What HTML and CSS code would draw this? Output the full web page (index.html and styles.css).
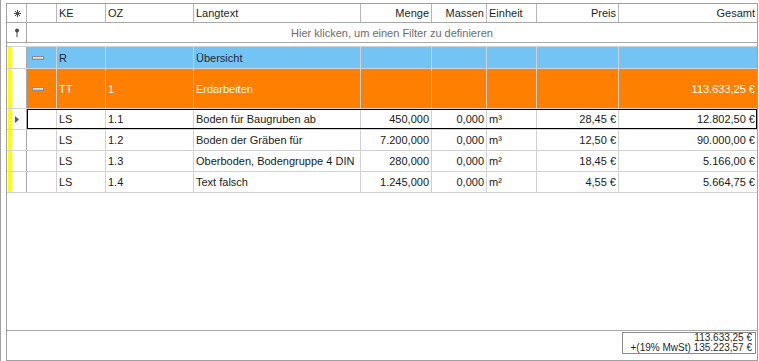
FILE: index.html
```html
<!DOCTYPE html>
<html lang="de">
<head>
    <meta charset="UTF-8">
    <title>Positionen</title>
    <link rel="stylesheet" href="styles.css">
</head>
<body>

<div class="frame">
<div class="grid">

    <!-- Column headers -->
    <div class="row head">
        <div class="cell ind center">
            <svg width="7" height="7" viewBox="0 0 7 7"><path d="M3.5 0v7M0 3.5h7M1 1l5 5M6 1l-5 5" stroke="#4a4a4a" stroke-width="1" fill="none"/></svg>
        </div>
        <div class="cell"></div>
        <div class="cell">KE</div>
        <div class="cell">OZ</div>
        <div class="cell">Langtext</div>
        <div class="cell r">Menge</div>
        <div class="cell r">Massen</div>
        <div class="cell">Einheit</div>
        <div class="cell r">Preis</div>
        <div class="cell r">Gesamt</div>
    </div>

    <!-- Auto filter row -->
    <div class="row filter">
        <div class="cell ind center">
            <svg width="6" height="9" viewBox="0 0 6 9"><circle cx="3" cy="2.5" r="2" fill="#4a4a4a"/><path d="M3 4v5" stroke="#4a4a4a" stroke-width="1"/></svg>
        </div>
        <div class="cell filter-text">Hier klicken, um einen Filter zu definieren</div>
    </div>

    <div class="gap"></div>

    <!-- Group rows -->
    <div class="row node blue">
        <div class="cell ind"><span class="bar"></span></div>
        <div class="cell exp"><span class="minus"></span></div>
        <div class="cell">R</div>
        <div class="cell"></div>
        <div class="cell">Übersicht</div>
        <div class="cell"></div>
        <div class="cell"></div>
        <div class="cell"></div>
        <div class="cell"></div>
        <div class="cell"></div>
    </div>
    <div class="row node orange">
        <div class="cell ind"><span class="bar"></span></div>
        <div class="cell exp"><span class="minus"></span></div>
        <div class="cell">TT</div>
        <div class="cell">1</div>
        <div class="cell">Erdarbeiten</div>
        <div class="cell"></div>
        <div class="cell"></div>
        <div class="cell"></div>
        <div class="cell"></div>
        <div class="cell r">113.633,25 €</div>
    </div>

    <!-- Positions -->
    <div class="row item selected">
        <div class="cell ind"><span class="bar"></span><svg class="arrow" width="4" height="7" viewBox="0 0 4 7"><path d="M0 0L4 3.5L0 7z" fill="#5c5c5c"/></svg></div>
        <div class="cell"></div>
        <div class="cell">LS</div>
        <div class="cell">1.1</div>
        <div class="cell">Boden für Baugruben ab</div>
        <div class="cell r">450,000</div>
        <div class="cell r">0,000</div>
        <div class="cell">m³</div>
        <div class="cell r">28,45 €</div>
        <div class="cell r">12.802,50 €</div>
    </div>
    <div class="row item">
        <div class="cell ind"><span class="bar"></span></div>
        <div class="cell"></div>
        <div class="cell">LS</div>
        <div class="cell">1.2</div>
        <div class="cell">Boden der Gräben für</div>
        <div class="cell r">7.200,000</div>
        <div class="cell r">0,000</div>
        <div class="cell">m³</div>
        <div class="cell r">12,50 €</div>
        <div class="cell r">90.000,00 €</div>
    </div>
    <div class="row item">
        <div class="cell ind"><span class="bar"></span></div>
        <div class="cell"></div>
        <div class="cell">LS</div>
        <div class="cell">1.3</div>
        <div class="cell">Oberboden, Bodengruppe 4 DIN</div>
        <div class="cell r">280,000</div>
        <div class="cell r">0,000</div>
        <div class="cell">m²</div>
        <div class="cell r">18,45 €</div>
        <div class="cell r">5.166,00 €</div>
    </div>
    <div class="row item">
        <div class="cell ind"><span class="bar"></span></div>
        <div class="cell"></div>
        <div class="cell">LS</div>
        <div class="cell">1.4</div>
        <div class="cell">Text falsch</div>
        <div class="cell r">1.245,000</div>
        <div class="cell r">0,000</div>
        <div class="cell">m²</div>
        <div class="cell r">4,55 €</div>
        <div class="cell r">5.664,75 €</div>
    </div>

    <div class="spacer"></div>

    <!-- Summary footer -->
    <div class="footer">
        <div class="sum">
            <div>113.633,25 €</div>
            <div>+(19% MwSt) 135.223,57 €</div>
        </div>
    </div>

</div>
</div>

</body>
</html>
```

FILE: styles.css
```css
* {
    box-sizing: border-box;
}
body {
    margin: 0;
    font-family: "Liberation Sans", Arial, sans-serif;
    font-size: 11px;
    color: #1a1a1a;
    background: #fff;
}
.frame {
    height: 361px;
    border-left: 1px solid #a0a0a0;
    padding: 3px 0 0 5px;
}
.grid {
    width: 752px;
    height: 358px;
    border: 1px solid #a0a0a0;
    display: flex;
    flex-direction: column;
}
.row {
    display: grid;
    grid-template-columns: 20px 30px 49px 88px 167px 71px 55px 50px 82px 138px;
    border-bottom: 1px solid #d2d2d2;
    position: relative;
    flex: none;
}
.cell {
    display: flex;
    align-items: center;
    padding: 0 2px;
    border-right: 1px solid #d2d2d2;
    white-space: nowrap;
    overflow: hidden;
}
.cell:last-child {
    border-right: none;
}
.cell.r {
    justify-content: flex-end;
}
.cell.center {
    justify-content: center;
}
.ind {
    padding: 0 0 0 1px;
    background: #fff;
    border-right-color: #a8a8a8;
}

/* header + filter */
.head {
    height: 19px;
    border-bottom-color: #a8a8a8;
}
.head .cell {
    border-right-color: #b8b8b8;
    color: #1f1f1f;
}
.filter {
    height: 20px;
    border-bottom-color: #a8a8a8;
}
.filter-text {
    grid-column: 2 / -1;
    justify-content: center;
    color: #6b6b6b;
}
.gap {
    height: 4px;
    border-bottom: 1px solid #d2d2d2;
    flex: none;
}

/* tree nodes */
.node {
    height: 22px;
}
.node.orange {
    height: 40px;
}
.blue .cell {
    background: #74c3f5;
    color: #1c2a38;
}
.orange .cell {
    background: #ff8000;
    color: #fff;
}
.node .ind {
    background: #fff;
}
.exp {
    padding-left: 5px;
}
.minus {
    width: 12px;
    height: 4px;
    border: 1px solid #8e8e8e;
    background: linear-gradient(#ececec, #bdbdbd);
}
.bar {
    width: 4px;
    align-self: stretch;
    background: #ffff00;
}
.arrow {
    margin-left: 3px;
}

/* positions */
.item {
    height: 21px;
}
.selected::after {
    content: "";
    position: absolute;
    top: 0;
    bottom: 0;
    left: 20px;
    right: 0;
    border: 1px solid #000;
}

.spacer {
    flex: 1;
}
.footer {
    flex: none;
    height: 30px;
    border-top: 1px solid #a8a8a8;
    display: flex;
    justify-content: flex-end;
    align-items: flex-start;
    padding: 1px 1px 0 0;
}
.sum {
    width: 134px;
    border: 1px solid #8a8a8a;
    padding: 0 3px;
    text-align: right;
    font-size: 10px;
    line-height: 10px;
    color: #1f1f1f;
}
```
